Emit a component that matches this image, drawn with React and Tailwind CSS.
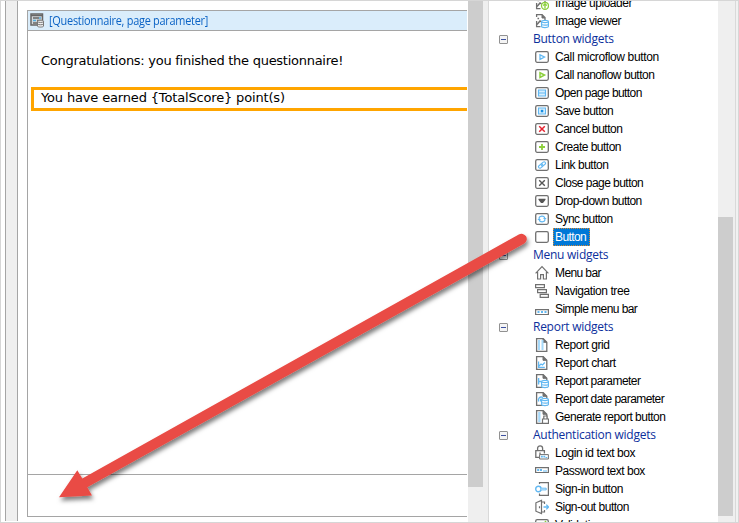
import React from 'react';

const G = '#707070';
const B = '#62b8f2';
const L = '#8ccf3c';

const Frame = ({ children }) => (
  <>
    <rect x="0.7" y="2.7" width="12.6" height="10.6" rx="1.5" fill="#fff" stroke={G} strokeWidth="1.3" />
    {children}
  </>
);

const Doc = ({ children }) => (
  <>
    <path d="M1.6 1.6h6.6l3.6 3.6v9.2H1.6z" fill="#fff" stroke={G} strokeWidth="1.3" />
    <path d="M8 1.8v3.5h3.6z" fill={G} stroke={G} />
    {children}
  </>
);

const Stack = () => (
  <g fill="#fff" stroke={B} strokeWidth="1.2">
    <path d="M6.6 8.5v5c0 1.4 6.8 1.4 6.8 0v-5" />
    <ellipse cx="10" cy="8.5" rx="3.4" ry="1.1" />
    <path d="M6.6 11.2c0 1.1 6.8 1.1 6.8 0" fill="none" />
  </g>
);

const Picture = () => (
  <>
    <path d="M5.5 13.6H1.6V8M1.6 4V1.6H7L10 4.6V7" fill="none" stroke={G} strokeWidth="1.3" />
    <path d="M7 1.6V5h3" fill={G} stroke={G} />
    <path d="M2.5 5.6h1.6M2 11.5l3-3.6 1.5 1" fill="none" stroke={G} strokeWidth="1.5" />
  </>
);

const icons = {
  uploader: <><Picture /><circle cx="10" cy="10.8" r="3.5" fill="#fff" stroke={L} strokeWidth="1.3" /><path d="M10 13.4V9M8.2 10.6 10 8.7l1.8 1.9" fill="none" stroke={L} strokeWidth="1.3" /></>,
  viewer: <><Picture /><Stack /></>,
  micro: <Frame><path d="M5 5.8v4.6L9.5 8z" fill="none" stroke={B} strokeWidth="1.3" /></Frame>,
  nano: <Frame><path d="M5 5.8v4.6L9.5 8z" fill="none" stroke={L} strokeWidth="1.5" /></Frame>,
  open: <Frame><path d="M3.5 5h7v6h-7zM3.5 8h7" fill="#d8effd" stroke={B} strokeWidth="1.2" /></Frame>,
  save: <Frame><path d="M3.5 5h7v6h-7z" fill="#d8effd" stroke={B} strokeWidth="1.1" /><path d="M5.8 6.8h2.5v2.5H5.8z" fill="#168de2" /></Frame>,
  cancel: <Frame><path d="m4.2 5.2 5.6 5.6m0-5.6-5.6 5.6" stroke="#e52330" strokeWidth="1.5" /></Frame>,
  create: <Frame><path d="M7 5v6M4 8h6" stroke={L} strokeWidth="1.8" /></Frame>,
  link: <Frame><g transform="rotate(-40 7 8)" fill="none" stroke={B} strokeWidth="1.1"><rect x="2.8" y="6.6" width="5" height="2.8" rx="1.4" /><rect x="6.2" y="6.6" width="5" height="2.8" rx="1.4" /></g></Frame>,
  close: <Frame><path d="m4.2 5.2 5.6 5.6m0-5.6-5.6 5.6" stroke="#555" strokeWidth="1.4" /></Frame>,
  drop: <Frame><path d="M3.5 5.8h7v1L8 10H6L3.5 6.8z" fill="#555" /></Frame>,
  sync: <Frame><path d="M3.8 7.3C4.5 4.5 9 4.3 9.8 7M10.2 8.7C9.5 11.5 5 11.7 4.2 9" fill="none" stroke={B} strokeWidth="1.2" /><path d="M8 7h3.6L9.8 9zM2.4 9h3.6L4.2 7z" fill={B} /></Frame>,
  button: <Frame />,
  home: <path d="M.6 8.4 7 1.6l6.4 6.8M2.6 7v7h3V9.6h2.8V14h3V7" fill="none" stroke={G} strokeWidth="1.2" />,
  nav: <g fill="#fff" stroke={G} strokeWidth="1.2"><path d="M.6 1.6h8.8v3H.6zM2.6 6.6h8.8v3H2.6zM5.2 11.4h8.2v3H5.2z" /></g>,
  simple: <><path d="M.6 8.6h12.8v4.9H.6z" fill="#fff" stroke={G} strokeWidth="1.2" /><path d="M2.5 10h2v2h-2zM6 10h2v2H6zM9.5 10h2v2h-2z" fill={B} /></>,
  grid: <Doc><path d="M3 3h2v10H3zM6.5 3h2v10h-2z" fill="#a6d9fa" /></Doc>,
  chart: <Doc><path d="M3.6 6.5v5.8h6.2M4 11l2-2 1.5 1 2.3-2.5" fill="none" stroke={B} strokeWidth="1.2" /></Doc>,
  param: <Doc><path d="M3.6 5v6.5M3.6 8.5h2.6" fill="none" stroke={B} strokeWidth="1.4" /><Stack /></Doc>,
  date: <Doc><path d="M8 6.5C5 5 2.6 7.5 3.6 10.5M5.5 7.8v2h1" fill="none" stroke={B} strokeWidth="1.3" /><Stack /></Doc>,
  generate: <Doc><path d="M3.2 3h2.3v10H3.2z" fill="#a6d9fa" /><path d="M7.5 10h6v4.3h-6zM8.8 10V7h3.2v3" fill="#fff" stroke={G} strokeWidth="1.2" /></Doc>,
  login: <><path d="M2.6 5.5V3.2c0-3 5-3 5 0v2.3M4.5 12.4H.8V5.6h8.6V8.4M5 7.5v2" fill="none" stroke={G} strokeWidth="1.3" /><path d="M4.6 9.6h8.8v4.4H4.6z" fill="#fff" stroke={G} /><path d="M6 11.6h4.5" stroke={B} strokeWidth="1.7" strokeDasharray="1.8 .6" /><path d="M10.5 12.5h1.8" stroke={B} /></>,
  password: <><path d="M.6 4.6h12.8v4.9H.6z" fill="#fff" stroke={G} strokeWidth="1.2" /><path d="M2.2 7h2M5 7h2" stroke={B} strokeWidth="1.8" /><path d="M8 8h4" stroke={B} /></>,
  signin: <><path d="M4.5 3V1.6h8.9v12.8H4.5V12.5" fill="none" stroke={G} strokeWidth="1.2" /><circle cx="3.4" cy="8" r="2.7" fill="#fff" stroke={B} strokeWidth="1.4" /><path d="M6 7.2h5.2v1.7H6" fill="#fff" stroke={B} /></>,
  signout: <><path d="M6.5 1.4.9 3.8v8.4l5.6 2.4zM6.5 3h3v2M6.5 13h3v-2M4.5 7.2v2" fill="none" stroke={G} strokeWidth="1.2" /><path d="M8.5 8h5M11.3 5.6 13.5 8l-2.2 2.4" fill="none" stroke={B} strokeWidth="1.3" /></>,
  valid: <Frame><path d="m5 7 2 2 4-5" fill="none" stroke={L} strokeWidth="1.4" /></Frame>,
};

const rows = [
  ['uploader', 'Image uploader', 'tracking-[-0.45px]'],
  ['viewer', 'Image viewer', 'tracking-[-0.45px]'],
  [null, 'Button widgets'],
  ['micro', 'Call microflow button', 'tracking-[-0.36px]'],
  ['nano', 'Call nanoflow button', 'tracking-[-0.46px]'],
  ['open', 'Open page button', 'tracking-[-0.58px]'],
  ['save', 'Save button', 'tracking-[-0.53px]'],
  ['cancel', 'Cancel button', 'tracking-[-0.52px]'],
  ['create', 'Create button', 'tracking-[-0.52px]'],
  ['link', 'Link button', 'tracking-[-0.48px]'],
  ['close', 'Close page button', 'tracking-[-0.54px]'],
  ['drop', 'Drop-down button', 'tracking-[-0.54px]'],
  ['sync', 'Sync button', 'tracking-[-0.53px]'],
  ['button', 'Button', 'tracking-[-0.6px]'],
  [null, 'Menu widgets'],
  ['home', 'Menu bar', 'tracking-[-0.6px]'],
  ['nav', 'Navigation tree', 'tracking-[-0.42px]'],
  ['simple', 'Simple menu bar', 'tracking-[-0.56px]'],
  [null, 'Report widgets'],
  ['grid', 'Report grid', 'tracking-[-0.44px]'],
  ['chart', 'Report chart', 'tracking-[-0.44px]'],
  ['param', 'Report parameter', 'tracking-[-0.54px]'],
  ['date', 'Report date parameter', 'tracking-[-0.55px]'],
  ['generate', 'Generate report button', 'tracking-[-0.5px]'],
  [null, 'Authentication widgets'],
  ['login', 'Login id text box', 'tracking-[-0.43px]'],
  ['password', 'Password text box', 'tracking-[-0.48px]'],
  ['signin', 'Sign-in button', 'tracking-[-0.44px]'],
  ['signout', 'Sign-out button', 'tracking-[-0.5px]'],
  ['valid', 'Validation message', 'tracking-[-0.45px]'],
];

function Row({ icon, label, tracking }) {
  if (!icon) {
    return (
      <div className="flex h-[18px] shrink-0 items-center pl-[10px]">
        <span className="flex h-[9px] w-[9px] items-center justify-center rounded-[1px] border border-[#919191] bg-[#f4f4f4]">
          <span className="h-px w-[5px] bg-[#3c50a0]" />
        </span>
        <span className="ml-[25px] whitespace-nowrap font-['Open_Sans',sans-serif] text-[12px] leading-[18px] tracking-[-0.26px] text-[#0c2f9c]">{label}</span>
      </div>
    );
  }
  const selected = icon === 'button';
  return (
    <div className="flex h-[18px] shrink-0 items-center pl-[46px]">
      <svg width="14" height="16" viewBox="0 0 14 16" className="shrink-0">{icons[icon]}</svg>
      <span className={`ml-[4px] whitespace-nowrap border border-dotted pl-px font-['Liberation_Sans',sans-serif] text-[12px] leading-[16px] ${tracking} ${selected ? 'border-[#d98a35] bg-[#0078d7] pr-[3px] text-white' : 'border-transparent text-black'}`}>{label}</span>
    </div>
  );
}

function Editor() {
  return (
    <div className="mr-px flex w-[466px] shrink-0 overflow-hidden pl-[4px]">
      <div className="mb-px w-[13px] shrink-0 border-x border-[#a5a5a5] bg-[#efefef]" />
      <div className="ml-[9px] mt-[9px] flex h-[507px] flex-1 flex-col border-y border-l border-[#a5a5a5] font-['DejaVu_Sans',sans-serif] text-[13px] text-black">
        <div className="flex h-[20px] shrink-0 items-center border-b border-[#a5a5a5] bg-[#daedfb] pl-[2px]">
          <svg width="15" height="15" viewBox="0 0 15 15">
            <path d="M1 1h11.5v11H1z" fill="#d5d8da" stroke="#666" strokeWidth="1.5" />
            <path d="M1 2.5h12" stroke="#666" strokeWidth="1.5" />
            <path d="M3 5h6M7 7.5h4M3 10h4" stroke="#666" strokeWidth="1.6" />
            <path d="M9 5h2M3 7.5h3" stroke="#52acdf" strokeWidth="1.5" />
            <path d="M7.5 8.3v4.8c0 1.3 6 1.3 6 0V8.3c0-1.3-6-1.3-6 0z" fill="#eee" stroke="#777" />
            <path d="M7.5 8.7c1 1 5 1 6 0M7.5 11c1 1 5 1 6 0" fill="none" stroke="#777" />
          </svg>
          <span className="ml-[4px] whitespace-nowrap font-['Open_Sans',sans-serif] text-[12px] leading-[18px] tracking-[-0.28px] text-[#0b63c5]"><span className="inline-block origin-left scale-x-[0.91]">[Questionnaire, page parameter]</span></span>
        </div>
        <div className="mt-[21px] h-[18px] shrink-0 whitespace-nowrap pl-[13px] leading-[18px] tracking-[-0.27px]">Congratulations: you finished the questionnaire!</div>
        <div className="ml-[3px] mt-[17px] h-[24px] shrink-0 whitespace-nowrap border-y-[3px] border-l-[3px] border-[#ffa500] pl-[7px] leading-[16px] tracking-[-0.16px]">You have earned {'{TotalScore}'} point(s)</div>
        <div className="flex-1" />
        <div className="h-[42px] shrink-0 border-t border-[#a5a5a5]" />
      </div>
    </div>
  );
}

export default function App() {
  return (
    <div className="relative flex h-[523px] w-[739px] overflow-hidden border border-[#d6d6d6] bg-white">
      <div className="flex w-[487px] shrink-0">
        <Editor />
        <div className="w-[20px] shrink-0 bg-[#efefef]">
          <div className="h-[486px] w-[15px] bg-[#cdcdcd]" />
        </div>
      </div>
      <div className="flex h-full flex-1 border-x border-[#d9d9d9]">
        <div className="flex w-[229px] shrink-0 flex-col overflow-hidden">
          <div className="-mt-[7px] flex flex-col">
            {rows.map(([icon, label, tracking]) => <Row key={label} icon={icon} label={label} tracking={tracking} />)}
          </div>
        </div>
        <div className="flex-1 bg-[#efefef] pt-[216px]">
          <div className="h-[299px] w-[15px] bg-[#cdcdcd]" />
        </div>
      </div>
      <div className="w-[2px] shrink-0 bg-[#f1f1f1]" />
      <svg className="pointer-events-none absolute -left-px -top-px" width="739" height="523" viewBox="0 0 739 523">
        <defs>
          <filter id="shadow" x="-5%" y="-5%" width="112%" height="115%">
            <feDropShadow dx="1.5" dy="3.5" stdDeviation="2" floodColor="#000" floodOpacity="0.5" />
          </filter>
        </defs>
        <path d="M59 497.3 77.3 470.2 82.3 478.5 518.8 234.5A5.2 5.2 0 0 1 524.2 243.6L87.3 487.3 92 495.5z" fill="#e94b44" filter="url(#shadow)" />
      </svg>
    </div>
  );
}
